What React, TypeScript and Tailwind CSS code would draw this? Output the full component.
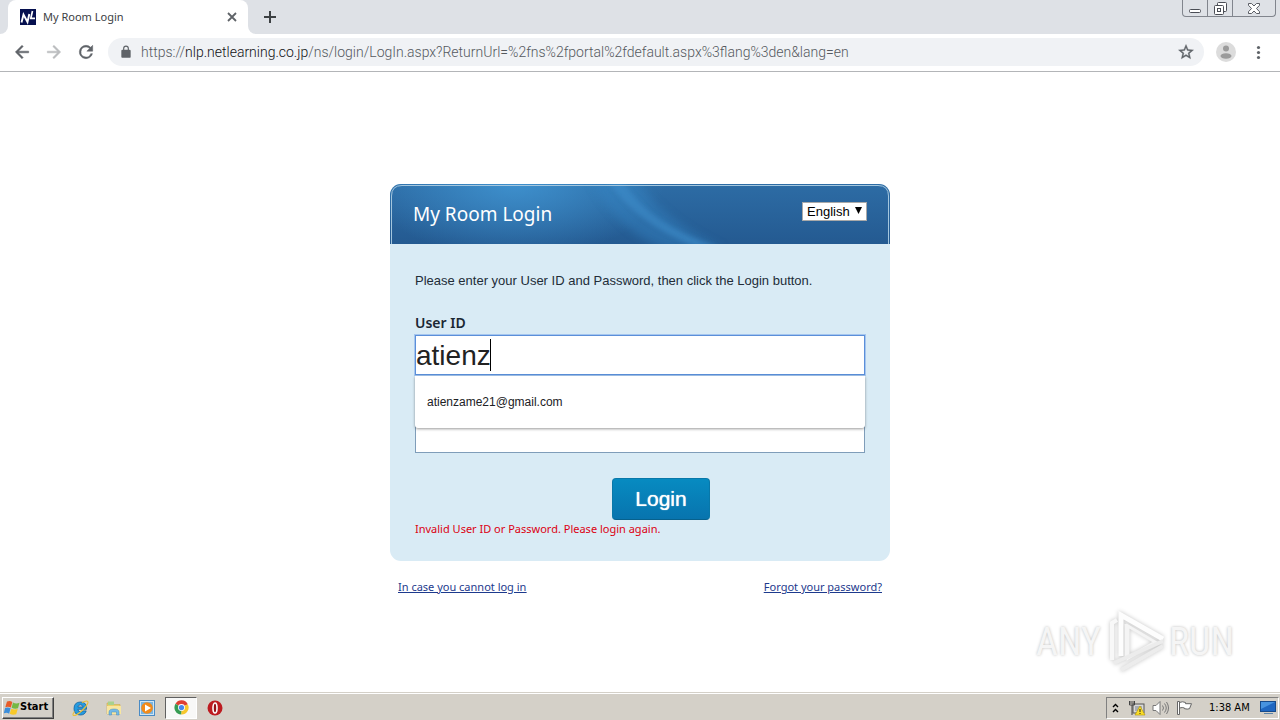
import { useState } from "react";

const ui = "font-['Noto_Sans','Liberation_Sans',sans-serif]";

function BrowserTabs() {
  return (
    <div className="flex h-[34px] items-start bg-[#dee1e6] pr-2">
      <div className="h-full w-2 bg-white">
        <div className="h-full w-full rounded-br-lg bg-[#dee1e6]" />
      </div>
      <div className="flex h-full w-[240px] items-center rounded-t-lg bg-white pl-3 pr-[11px]">
        <svg viewBox="0 0 16 16" className="h-4 w-4 shrink-0" aria-hidden="true">
          <rect width="16" height="16" fill="#06104f" />
          <path d="M1.500 13.500 3.500 5.500l4 7.500 1.800-8" fill="none" stroke="#fff" strokeWidth="1.900" />
          <path d="M12.500 2 10.800 9.300h4.200" fill="none" stroke="#fff" strokeWidth="1.700" />
        </svg>
        <span className="ml-[7px] flex-1 text-[11px] leading-4 text-[#3c4043]">My Room Login</span>
        <button type="button" aria-label="Close tab" className="flex h-4 w-[10px] items-center justify-center">
          <svg viewBox="0 0 10 10" className="h-[10px] w-[10px]">
            <path d="M1 1l8 8M9 1l-8 8" stroke="#5f6368" strokeWidth="1.800" />
          </svg>
        </button>
      </div>
      <div className="h-full w-2 bg-white">
        <div className="h-full w-full rounded-bl-lg bg-[#dee1e6]" />
      </div>
      <button type="button" aria-label="New tab" className="flex h-full w-7 items-center justify-center">
        <svg viewBox="0 0 12 12" className="h-3 w-3">
          <path d="M6 0v12M0 6h12" stroke="#3c4043" strokeWidth="2" />
        </svg>
      </button>
      <div className="ml-auto mr-[-4px] flex h-[17px] overflow-hidden rounded-b-[4px] border border-t-0 border-[#81858d] text-[#4a4d55]">
        <button type="button" aria-label="Minimize" className="flex w-[25px] items-end justify-center border-r border-[#81858d] pb-[3px]">
          <svg viewBox="0 0 12 4" className="h-1 w-3">
            <rect x=".5" y=".5" width="11" height="3" rx="1" fill="#fff" stroke="currentColor" />
          </svg>
        </button>
        <button type="button" aria-label="Restore" className="flex w-[25px] items-center justify-center border-r border-[#81858d]">
          <svg viewBox="0 0 13 13" className="h-[13px] w-[13px]" fill="#fff" stroke="currentColor">
            <rect x="3.500" y=".5" width="9" height="9" rx="1" />
            <rect x=".5" y="3.500" width="9" height="9" rx="1" />
            <rect x="3.500" y="6.500" width="3" height="3" />
          </svg>
        </button>
        <button type="button" aria-label="Close" className="flex w-[42px] items-center justify-center">
          <svg viewBox="0 0 12 11" className="h-[11px] w-3">
            <path d="M.5.5h3L6 3 8.500.5h3v1.800L8.500 5.500l3 3.200v1.800h-3L6 8l-2.500 2.500h-3V8.700l3-3.200-3-3.200z" fill="#fff" stroke="currentColor" strokeWidth=".9" />
          </svg>
        </button>
      </div>
    </div>
  );
}

function AddressBar() {
  return (
    <div className="flex h-[38px] items-center border-b border-[#b3b5b8] bg-white pb-[2px] pl-3 pr-3">
      <div className="flex items-center gap-3 pr-3">
        <button type="button" aria-label="Back">
          <svg viewBox="0 0 24 24" className="h-5 w-5" fill="#5f6368" stroke="#5f6368" strokeWidth=".6"><path d="M20 11H7.830l5.590-5.590L12 4l-8 8 8 8 1.410-1.410L7.830 13H20z" /></svg>
        </button>
        <button type="button" aria-label="Forward">
          <svg viewBox="0 0 24 24" className="h-5 w-5" fill="#babcbe" stroke="#babcbe" strokeWidth=".6"><path d="M4 11h12.170l-5.590-5.590L12 4l8 8-8 8-1.410-1.410L16.170 13H4z" /></svg>
        </button>
        <button type="button" aria-label="Reload">
          <svg viewBox="0 0 24 24" className="h-5 w-5" fill="#5f6368" stroke="#5f6368" strokeWidth=".6"><path d="M17.650 6.350A7.960 7.960 0 0 0 12 4a8 8 0 1 0 7.730 10h-2.080A6 6 0 1 1 12 6c1.660 0 3.140.690 4.220 1.780L13 11h7V4z" /></svg>
        </button>
      </div>
      <div className="flex h-7 min-w-0 flex-1 items-center rounded-full bg-[#f0f2f5] pl-[10px] pr-[9px]">
        <svg viewBox="0 0 24 24" className="h-4 w-4 shrink-0 p-[1px]" fill="#5f6368" aria-hidden="true">
          <path d="M18 8h-1V6a5 5 0 0 0-10 0v2H6a2 2 0 0 0-2 2v10c0 1.100.9 2 2 2h12a2 2 0 0 0 2-2V10a2 2 0 0 0-2-2zM9 8V6a3 3 0 0 1 6 0v2z" />
        </svg>
        <p className="ml-[7px] flex-1 truncate font-['Roboto',sans-serif] text-[14px] font-light leading-5 text-[#55595e]">
          https://<span className="text-[#101114]">nlp.netlearning.co.jp</span>/ns/login/LogIn.aspx?ReturnUrl=%2fns%2fportal%2fdefault.aspx%3flang%3den&amp;lang=en
        </p>
        <button type="button" aria-label="Bookmark this page">
          <svg viewBox="0 0 24 24" className="h-[18px] w-[18px]" fill="#5f6368" stroke="#5f6368" strokeWidth=".5"><path d="m22 9.240-7.190-.620L12 2 9.190 8.630 2 9.240l5.460 4.730L5.820 21 12 17.270 18.180 21l-1.630-7.030zM12 15.400l-3.760 2.270 1-4.280-3.320-2.880 4.380-.380L12 6.100l1.710 4.040 4.380.380-3.320 2.880 1 4.280z" /></svg>
        </button>
      </div>
      <button type="button" aria-label="Profile" className="ml-3">
        <svg viewBox="0 0 20 20" className="h-5 w-5">
          <circle cx="10" cy="10" r="10" fill="#dcdcdc" />
          <circle cx="10" cy="6.500" r="3" fill="#9b9b9b" />
          <ellipse cx="10" cy="14" rx="5.500" ry="2.800" fill="#9b9b9b" />
        </svg>
      </button>
      <button type="button" aria-label="Menu" className="ml-3">
        <svg viewBox="0 0 20 20" className="h-5 w-5" fill="#5f6368">
          <circle cx="10.500" cy="5.500" r="1.600" /><circle cx="10.500" cy="10.500" r="1.600" /><circle cx="10.500" cy="15.500" r="1.600" />
        </svg>
      </button>
    </div>
  );
}

function LoginCard() {
  const [user, setUser] = useState("atienz");
  return (
    <section className="mx-auto w-[500px] max-w-full">
      <form className="overflow-hidden rounded-[11px] bg-[#d9ebf5]" onSubmit={(e) => e.preventDefault()}>
        <div className="relative h-[60px]">
          <svg viewBox="0 0 500 60" preserveAspectRatio="none" className="absolute inset-0 h-full w-full" aria-hidden="true">
            <defs>
              <linearGradient id="base" x1="0" y1="0" x2="0" y2="1">
                <stop offset="0" stopColor="#2d6ca5" /><stop offset="1" stopColor="#245a91" />
              </linearGradient>
              <radialGradient id="glow" gradientUnits="userSpaceOnUse" cx="125" cy="-4" r="150" gradientTransform="scale(1 .5)">
                <stop offset="0" stopColor="#3e90cd" /><stop offset="1" stopColor="#3e90cd" stopOpacity="0" />
              </radialGradient>
              <filter id="soft" x="-20%" y="-20%" width="140%" height="140%"><feGaussianBlur stdDeviation="5" /></filter>
              <filter id="fine" x="-20%" y="-20%" width="140%" height="140%"><feGaussianBlur stdDeviation="2" /></filter>
            </defs>
            <rect width="500" height="60" fill="url(#base)" />
            <rect width="500" height="60" fill="url(#glow)" />
            <path d="M200-5h45q30 43 90 70h-60Q225 45 200-5z" fill="#3684c2" opacity=".45" filter="url(#soft)" />
            <path d="M216-5q30 45 90 68h22Q258 40 232-5z" fill="#3f8fcc" opacity=".5" filter="url(#fine)" />
            <path d="M1.500 60V12q0-10.500 10.500-10.500h476q10.500 0 10.500 10.500v48" fill="none" stroke="#a3c6de" />
          </svg>
          <div className="relative flex h-full items-start justify-between pl-[23px] pr-[23px] pt-[17px]">
            <h1 className="text-[19px] leading-[26px] text-white">My Room Login</h1>
            <div className="relative mt-[1px] h-[19px] w-[65px]">
              <select aria-label="Language" defaultValue="English" className="block h-full w-full appearance-none border border-[#a9a9a9] bg-white pl-1 font-['Liberation_Sans',sans-serif] text-[13px] leading-4 text-black">
                <option>English</option>
              </select>
              <svg viewBox="0 0 7 7" className="pointer-events-none absolute right-[5px] top-[5px] h-[7px] w-[7px]" aria-hidden="true"><path d="M0 0h7L3.500 7z" /></svg>
            </div>
          </div>
        </div>
        <div className="px-[25px] pb-6 pt-[27px]">
          <p className="font-['Liberation_Sans',sans-serif] text-[13px] leading-5 text-[#222d38]">Please enter your User ID and Password, then click the Login button.</p>
          <div className="relative mt-6">
            <label htmlFor="user" className="block text-[14px] font-semibold leading-4 text-[#1b2733]">User ID</label>
            <div className="relative mt-1 h-10 outline outline-1 outline-[#a5c6ef]">
              <input id="user" value={user} onChange={(e) => setUser(e.target.value)} autoComplete="off" className="block h-full w-full border border-[#5b8fd9] bg-white pt-[2px] font-['Liberation_Sans',sans-serif] text-[28px] text-[#222] outline-none" />
              <span className="pointer-events-none absolute left-[75px] top-1 h-8 w-px bg-black" />
            </div>
            <ul className="absolute inset-x-0 top-[61px] h-[52px] rounded-b-[3px] bg-white py-4 shadow-[0_1px_3px_rgba(0,0,0,0.4)]">
              <li className="px-3 font-['Liberation_Sans',sans-serif] text-[12px] leading-5 text-[#202124]">atienzame21@gmail.com</li>
            </ul>
          </div>
          <div className="mt-[38px]">
            <input id="pass" type="password" aria-label="Password" className="block h-10 w-full border border-[#7f9db9] bg-white px-1 text-[28px] outline-none" />
          </div>
          <div className="mt-[25px] flex justify-center pl-[42px]">
            <button type="submit" className="h-[42px] w-[98px] rounded-[4px] border border-[#0878a9] border-b-[#07618d] bg-gradient-to-b from-[#078bc1] to-[#0874ae] font-['Liberation_Sans',sans-serif] text-[21px] text-white [text-shadow:0_0_1px_#fff]">Login</button>
          </div>
          <p role="alert" className="text-[11px] leading-[17px] text-[#dc0012]">Invalid User ID or Password. Please login again.</p>
        </div>
      </form>
      <div className="flex justify-between px-2 pt-[17px] text-[11px] leading-[18px] text-[#1d3a8d] underline">
        <a href="#help">In case you cannot log in</a>
        <a href="#forgot">Forgot your password?</a>
      </div>
    </section>
  );
}

function Watermark() {
  return (
    <div className="pointer-events-none absolute bottom-[18px] right-[46px] flex items-center font-['Roboto_Condensed','Liberation_Sans_Narrow','Liberation_Sans',sans-serif] text-[38px] leading-[64px] text-[#f5f5f5] [text-shadow:0_0_3px_#bcbcbc]">
      <span>ANY</span>
      <svg viewBox="0 0 60 64" className="ml-2 h-16 w-[60px] drop-shadow-[0_0_2px_#c4c4c4]" fill="none" aria-hidden="true">
        <path d="M3 50V13l5-3" stroke="#f8f8f8" strokeWidth="4" />
        <path d="M12 46V5l42 24" stroke="#fdfdfd" strokeWidth="5" />
        <path d="M17 14v32M19 16l27 16-27 16z" stroke="#f4f4f4" strokeWidth="3" />
        <path d="M5 53l49-22M12 60l42-24" stroke="#ececec" strokeWidth="4" />
      </svg>
      <span>RUN</span>
    </div>
  );
}

function Taskbar() {
  return (
    <footer className="flex h-7 shrink-0 items-center border-t border-[#d4d0c8] bg-[#d4d0c8] pr-[1px] shadow-[inset_0_1px_0_#fff] font-['DejaVu_Sans_Condensed','DejaVu_Sans',sans-serif]">
      <button type="button" className="mt-[2px] ml-[2px] flex h-[22px] w-[52px] items-center border border-b-[#404040] border-l-white border-r-[#404040] border-t-white pl-[1px] text-[11px] font-bold text-black shadow-[inset_-1px_-1px_0_#808080]">
        <svg viewBox="0 0 16 16" className="h-4 w-4 shrink-0" aria-hidden="true">
          <path d="M3 1.500q3-1.200 5.300.5L6.900 7.500Q4 6 1.300 7.200z" fill="#e75b28" />
          <path d="M9 2.500q3 1.800 6.500.3L14 8.200Q11 9.300 7.600 7.800z" fill="#75b843" />
          <path d="M1.100 7.900Q4 6.800 6.600 8.300L5.100 13.700Q3 12-.2 13.200z" fill="#3c8edb" />
          <path d="M7.300 8.700Q10 10 13.700 9l-1.500 5.200q-3.300 1.200-6.400-.5z" fill="#f8c928" />
        </svg>
        Start
      </button>
      <div className="mt-[2px] ml-[17px] flex items-center">
        <button type="button" aria-label="Internet Explorer" className="mr-[17px]">
          <svg viewBox="0 0 18 18" className="h-[18px] w-[18px]">
            <path d="M15.500 10.300H6.800q.5 2.700 2.900 2.700 1.500 0 2.300-1.100h3.200Q13.900 16 9.500 16 3 16 3 9.700 3 3 9.500 3t6 7.300zM6.800 8h5.300Q11.500 5.800 9.500 5.800 7.300 5.800 6.800 8z" fill="#259be0" stroke="#14629f" strokeWidth=".8" />
            <path d="M3.500 12.500q-2.500 3.500-1 4 2.500.5 8-4.500T17 3.500Q17 .5 11 3.600" fill="none" stroke="#e8bf39" strokeWidth="1.100" />
          </svg>
        </button>
        <button type="button" aria-label="Explorer" className="mr-[17px]">
          <svg viewBox="0 0 16 16" className="h-4 w-4">
            <path d="M1 3h5l1 1.500h7V14H1z" fill="#edcf69" stroke="#c9a951" strokeWidth=".6" />
            <path d="M2 1.500h6V5H2z" fill="#a8d18d" /><path d="M1 6h14v8H1z" fill="#f8e6a0" />
            <path d="M3 15v-3q0-3 5-3t5 3v3h-2.500v-3h-5v3z" fill="#75b9e6" stroke="#468dbc" strokeWidth=".5" />
          </svg>
        </button>
        <button type="button" aria-label="Media Player" className="mr-[10px]">
          <svg viewBox="0 0 16 16" className="h-4 w-4">
            <rect x=".5" y=".5" width="15" height="15" fill="#cfe5f4" stroke="#4a8bc5" /><rect x="2" y="2" width="12" height="12" fill="#78b5e2" />
            <circle cx="8" cy="8" r="5.800" fill="#f28a19" /><path d="M6 4.500v7L12 8z" fill="#fff" />
          </svg>
        </button>
        <button type="button" aria-label="Chrome" className="mr-[10px] flex h-[22px] w-[32px] items-center justify-center border border-b-white border-l-[#606060] border-r-white border-t-[#606060] bg-[#f8f8f7]">
          <svg viewBox="0 0 16 16" className="h-[15px] w-[15px]">
            <path d="M8 8 1.600 4A7.500 7.500 0 0 1 14.700 4.500z" fill="#df3f32" />
            <path d="M8 8 14.700 4.500A7.500 7.500 0 0 1 7.600 15.500z" fill="#f6c72c" />
            <path d="M8 8 7.600 15.500A7.500 7.500 0 0 1 1.600 4z" fill="#379c53" />
            <circle cx="8" cy="8" r="3.700" fill="#fff" /><circle cx="8" cy="8" r="2.800" fill="#4687ed" />
          </svg>
        </button>
        <button type="button" aria-label="Opera">
          <svg viewBox="0 0 16 16" className="h-4 w-4">
            <circle cx="8" cy="8" r="7.500" fill="#bd1b20" /><ellipse cx="8" cy="8" rx="2" ry="5" fill="#941116" stroke="#fff" strokeWidth="1.600" />
          </svg>
        </button>
      </div>
      <div className="mt-[2px] ml-auto flex h-[22px] w-[173px] items-center border border-b-white border-l-[#808080] border-r-white border-t-[#808080] pl-[5px] text-black">
        <svg viewBox="0 0 7 10" className="h-[10px] w-[7px]" fill="none" stroke="#000" strokeWidth="1.400" aria-label="Show hidden icons"><path d="m1 4 2.500-2.500L6 4M1 9l2.500-2.500L6 9" /></svg>
        <svg viewBox="0 0 18 16" className="ml-[9px] h-4 w-[18px]" aria-label="Network warning">
          <rect x="5" y="4" width="11" height="9" fill="#d9d9d9" stroke="#555" /><path d="M7 6h7v5H7z" fill="#a8adb3" />
          <path d="M1.500 1v4h5V1M4 5v10M3 1v3M5 1v3" fill="none" stroke="#444" />
          <path d="m12 6 5 9H7z" fill="#fadd27" stroke="#b49400" strokeWidth=".6" /><path d="M12 9v3m0 1v1" stroke="#222" />
        </svg>
        <svg viewBox="0 0 17 16" className="ml-[6px] h-4 w-[17px]" fill="none" stroke="#777" aria-label="Volume">
          <path d="M1 5.500h3L8 1.500v13l-4-4H1z" fill="#fff" /><path d="M10.500 5.500q2 2.500 0 5M12.500 3.500q3.500 4.500 0 9M14.500 2q4 6 0 12" />
        </svg>
        <svg viewBox="0 0 17 16" className="ml-[7px] h-4 w-[17px]" fill="#fff" stroke="#666" aria-label="Action center"><path d="M1.500 1.500h2v13h-2zM3.500 2.500q3-1.500 6 0v1.200h6l-2 5q-2 .8-5 0V8q-2-1-5 0z" /></svg>
        <time className="ml-4 text-[11px] leading-4">1:38 AM</time>
        <svg viewBox="0 0 16 15" className="ml-auto mr-[2px] h-[15px] w-4" aria-label="Show desktop"><rect x=".5" y="1.500" width="15" height="10" fill="#1f67c1" stroke="#164a8a" /><path d="M1 2h14L1 9z" fill="#4793df" /><path d="M4 13h9v1H4z" fill="#5d84a8" /></svg>
      </div>
    </footer>
  );
}

export default function App() {
  return (
    <div className={"flex min-h-screen flex-col bg-white " + ui}>
      <header><BrowserTabs /><AddressBar /></header>
      <main className="relative flex-1 pt-28">
        <LoginCard />
        <Watermark />
      </main>
      <Taskbar />
    </div>
  );
}
